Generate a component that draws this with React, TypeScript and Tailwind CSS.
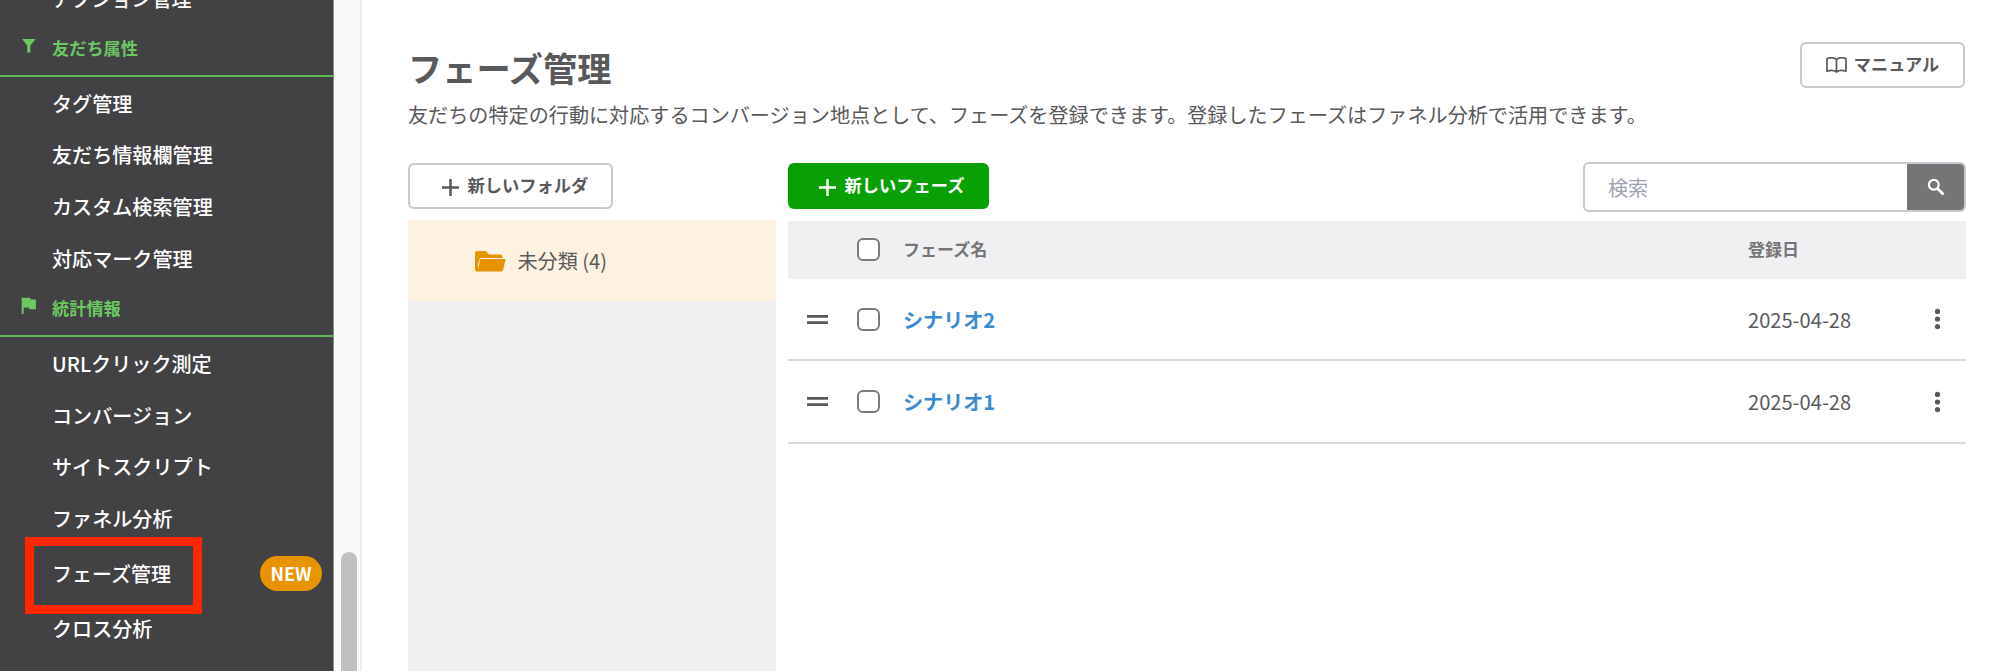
import type { ReactNode } from 'react';

interface Phase {
  name: string;
  date: string;
}

const friendItems = ['タグ管理', '友だち情報欄管理', 'カスタム検索管理', '対応マーク管理'];
const statItems = ['URLクリック測定', 'コンバージョン', 'サイトスクリプト', 'ファネル分析'];

const phases: Phase[] = [
  { name: 'シナリオ2', date: '2025-04-28' },
  { name: 'シナリオ1', date: '2025-04-28' },
];

function PlusIcon() {
  return (
    <svg className="w-[17px] h-[17px] mt-0.5" viewBox="0 0 17 17" stroke="currentColor" strokeWidth="2.5">
      <path d="M8.5 0v17M0 8.5h17" />
    </svg>
  );
}

function FolderIcon() {
  return (
    <svg className="w-[31px] h-[21px] text-[#e89400]" viewBox="0 0 31 21" fill="currentColor">
      <path d="M2.5 0h7.2c.8 0 1.3.2 1.8.8L14 3.4h11c1.6 0 2.6.9 2.6 2.4v1.1H6.6c-1 0-1.8.6-2.1 1.5L3 13.2V18.6l1.8-9.2c.2-.8.8-1.3 1.7-1.3h22.7c.9 0 1.4.7 1.2 1.5l-2.4 9.3c-.3 1-1.1 1.6-2.2 1.6H2.3C.9 20.5 0 19.6 0 18.2V2.3C0 .9.9 0 2.5 0z" />
    </svg>
  );
}

function BookIcon() {
  return (
    <svg className="w-[21px] h-[16px]" viewBox="0 0 21 16" fill="none" stroke="currentColor" strokeWidth="1.7" strokeLinejoin="round">
      <path d="M10.5 2.4C8.3.6 4 .5 1 1.7v12.6c3-1.1 7.2-1 9.5.7 2.3-1.7 6.5-1.8 9.5-.7V1.7C17 .5 12.7.6 10.5 2.4zM10.5 2.4V15" />
    </svg>
  );
}

function NavItem({ label }: { label: string }) {
  return (
    <li className="h-[51.8px] shrink-0 pl-[52px] pt-[2px] flex items-center text-[20.1px] font-medium text-white">
      {label}
    </li>
  );
}

function NavHeading({ label, icon }: { label: string; icon: ReactNode }) {
  return (
    <div className="h-[53px] shrink-0 pl-[17px] pb-[3px] flex items-center border-b-2 border-[#5fb957] text-[#6bc962]">
      <span className="w-[35px]">{icon}</span>
      <span className="text-[17.2px] font-bold">{label}</span>
    </div>
  );
}

function Sidebar() {
  return (
    <nav className="w-[334px] h-full shrink-0 bg-[#424143] border-r border-[#8b8b8b] flex flex-col overflow-hidden">
      <ul className="-mt-[28px]">
        <NavItem label="アクション管理" />
      </ul>

      {/* Friend attributes */}
      <NavHeading
        label="友だち属性"
        icon={
          <svg className="w-6 h-6 -mt-1" viewBox="0 0 24 24" fill="currentColor">
            <path d="M5 5h13.6l-5.2 6.6v7h-3.2v-7z" />
          </svg>
        }
      />
      <ul>
        {friendItems.map((label) => (
          <NavItem key={label} label={label} />
        ))}
      </ul>

      {/* Statistics */}
      <NavHeading
        label="統計情報"
        icon={
          <svg className="w-6 h-6 -mt-1" viewBox="0 0 24 24" fill="currentColor">
            <path d="M13.6 5.5L13.2 3.7H4.7v16.3h2v-6.5h5.2l.4 1.8h6.6V5.5z" />
          </svg>
        }
      />
      <ul>
        {statItems.map((label) => (
          <NavItem key={label} label={label} />
        ))}
        <li className="h-[58px] pl-[52px] pr-[11px] relative flex items-center justify-between">
          <span className="pt-[2px] text-[20px] font-medium text-white">フェーズ管理</span>
          <span className="w-[62px] h-[35px] rounded-full bg-[#e89400] flex items-center justify-center text-white text-[18px] font-bold">
            NEW
          </span>
          <span className="absolute left-[25px] -top-[7.5px] w-[177px] h-[77px] border-[9.5px] border-[#ff2600]" />
        </li>
        <NavItem label="クロス分析" />
      </ul>
    </nav>
  );
}

function Checkbox() {
  return <span className="block w-[23px] h-[23px] rounded-[6px] border-2 border-[#7b7b7b] bg-white" />;
}

function PhaseRow({ phase }: { phase: Phase }) {
  return (
    <div className="h-[82.5px] pt-px flex items-center border-b-2 border-[#d9d9d9]">
      <div className="w-[69px] pl-[19px]">
        <svg className="w-[21px] h-[9px]" viewBox="0 0 21 9" fill="currentColor">
          <path d="M0 0h21v2.8H0zM0 6.2h21V9H0z" />
        </svg>
      </div>
      <div className="w-[46px]">
        <Checkbox />
      </div>
      <div className="flex-1 pt-px text-[20.1px] font-bold text-[#3a8bd6]">{phase.name}</div>
      <div className="w-[184px] pt-px text-[20.1px]">{phase.date}</div>
      <div className="w-[34px]">
        <svg className="w-[12px] h-[22px]" viewBox="0 0 12 22" fill="currentColor">
          <circle cx="5.5" cy="3.4" r="2.6" />
          <circle cx="5.5" cy="11" r="2.6" />
          <circle cx="5.5" cy="18.6" r="2.6" />
        </svg>
      </div>
    </div>
  );
}

export default function App() {
  return (
    <div className="w-[1999px] h-[671px] flex overflow-hidden bg-white text-[#59595b] font-['Noto_Sans_CJK_JP',sans-serif]">
      <Sidebar />

      {/* Scrollbar */}
      <div className="w-[28px] shrink-0 bg-[#fafafa] border-r-2 border-[#ededed] pl-[7px] pt-[552px]">
        <div className="w-[16px] h-[140px] rounded-full bg-[#c1c1c1]" />
      </div>

      <main className="flex-1 pl-[46px] pr-[33px] pt-[42px]">
        {/* Title */}
        <header className="h-[120px] flex items-start justify-between">
          <div>
            <h1 className="h-[52px] flex items-center text-[34.2px] font-bold">フェーズ管理</h1>
            <p className="h-[41px] flex items-center pt-[2px] text-[20.13px]">
              友だちの特定の行動に対応するコンバージョン地点として、フェーズを登録できます。登録したフェーズはファネル分析で活用できます。
            </p>
          </div>
          <button className="w-[165px] h-[46px] mr-[1px] rounded-[6px] border-2 border-[#c9c8ce] flex items-center justify-center gap-[7px] text-[17.2px] font-bold">
            <BookIcon />
            <span className="pb-[2px]">マニュアル</span>
          </button>
        </header>

        <div className="flex gap-[12px]">
          {/* Folders */}
          <section className="w-[368px] pt-px">
            <button className="w-[205px] h-[46px] pl-[32px] rounded-[6px] border-2 border-[#c9c8ce] flex items-center gap-[8.5px] text-[17.25px] font-bold">
              <PlusIcon />
              <span className="pb-[2px]">新しいフォルダ</span>
            </button>
            <div className="mt-[11px] h-[460px] bg-[#f0f0f2]">
              <div className="h-[81px] pl-[67px] pt-[2px] flex items-center gap-[11.5px] bg-[#fcf2df] text-[20.1px]">
                <FolderIcon />
                未分類 (4)
              </div>
            </div>
          </section>

          {/* Phases */}
          <section className="flex-1">
            <div className="h-[59px] flex items-start justify-between">
              <button className="w-[201px] h-[46px] mt-px pl-[31px] rounded-[6px] bg-[#09a006] text-white flex items-center gap-[8.5px] text-[17.25px] font-bold">
                <PlusIcon />
                <span className="pb-[2px]">新しいフェーズ</span>
              </button>
              <div className="w-[383px] h-[50px] rounded-[6px] border-2 border-[#c9c8ce] flex overflow-hidden">
                <div className="flex-1 pl-[23px] pt-[2px] flex items-center text-[20.1px] text-[#9ca3af]">検索</div>
                <div className="w-[57px] bg-[#757577] flex items-center justify-center">
                  <svg className="w-[18px] h-[18px]" viewBox="0 0 18 18" fill="none" stroke="white">
                    <circle cx="6.8" cy="6.8" r="4.9" strokeWidth="2.2" />
                    <path d="M10.5 10.5l6 6" strokeWidth="2.6" />
                  </svg>
                </div>
              </div>
            </div>

            <div className="h-[57.5px] flex items-center bg-[#f0f0f2] text-[17px] font-bold text-[#757577]">
              <div className="w-[115px] pl-[69px]">
                <Checkbox />
              </div>
              <div className="flex-1 pb-[2px]">フェーズ名</div>
              <div className="w-[218px] pb-[2px]">登録日</div>
            </div>
            {phases.map((phase) => (
              <PhaseRow key={phase.name} phase={phase} />
            ))}
          </section>
        </div>
      </main>
    </div>
  );
}
